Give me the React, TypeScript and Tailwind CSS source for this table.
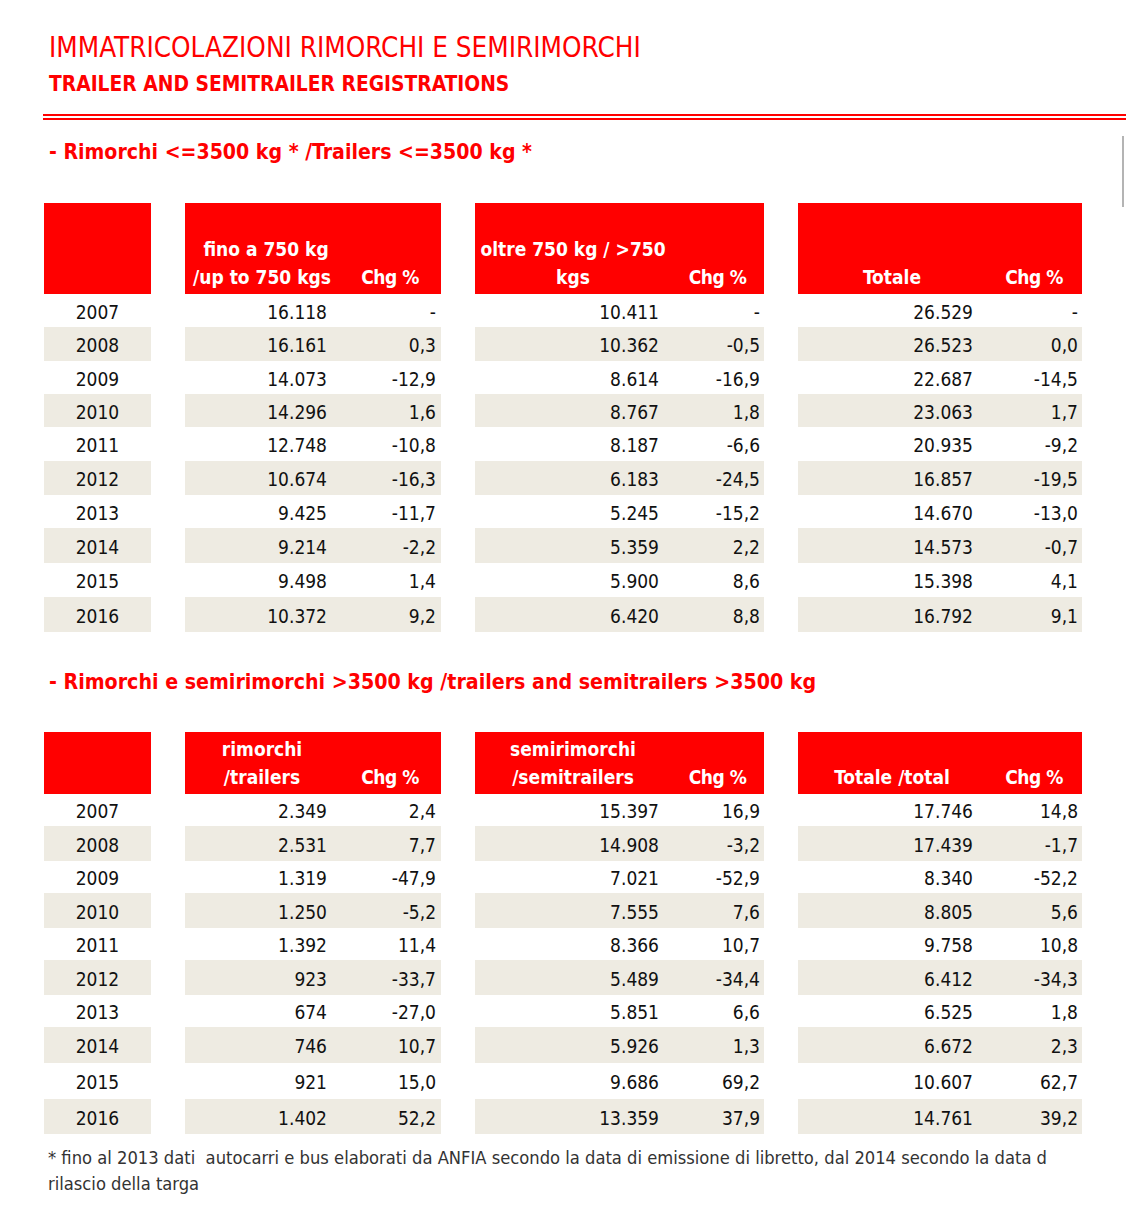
import React from "react";

type Row = [string, string, string, string, string, string, string];

const t1: Row[] = [
  ["2007", "16.118", "-", "10.411", "-", "26.529", "-"],
  ["2008", "16.161", "0,3", "10.362", "-0,5", "26.523", "0,0"],
  ["2009", "14.073", "-12,9", "8.614", "-16,9", "22.687", "-14,5"],
  ["2010", "14.296", "1,6", "8.767", "1,8", "23.063", "1,7"],
  ["2011", "12.748", "-10,8", "8.187", "-6,6", "20.935", "-9,2"],
  ["2012", "10.674", "-16,3", "6.183", "-24,5", "16.857", "-19,5"],
  ["2013", "9.425", "-11,7", "5.245", "-15,2", "14.670", "-13,0"],
  ["2014", "9.214", "-2,2", "5.359", "2,2", "14.573", "-0,7"],
  ["2015", "9.498", "1,4", "5.900", "8,6", "15.398", "4,1"],
  ["2016", "10.372", "9,2", "6.420", "8,8", "16.792", "9,1"],
];
const h1 = [33, 34, 33, 33, 34, 34, 33, 35, 34, 35];

const t2: Row[] = [
  ["2007", "2.349", "2,4", "15.397", "16,9", "17.746", "14,8"],
  ["2008", "2.531", "7,7", "14.908", "-3,2", "17.439", "-1,7"],
  ["2009", "1.319", "-47,9", "7.021", "-52,9", "8.340", "-52,2"],
  ["2010", "1.250", "-5,2", "7.555", "7,6", "8.805", "5,6"],
  ["2011", "1.392", "11,4", "8.366", "10,7", "9.758", "10,8"],
  ["2012", "923", "-33,7", "5.489", "-34,4", "6.412", "-34,3"],
  ["2013", "674", "-27,0", "5.851", "6,6", "6.525", "1,8"],
  ["2014", "746", "10,7", "5.926", "1,3", "6.672", "2,3"],
  ["2015", "921", "15,0", "9.686", "69,2", "10.607", "62,7"],
  ["2016", "1.402", "52,2", "13.359", "37,9", "14.761", "39,2"],
];
const h2 = [32, 35, 32, 35, 32, 35, 32, 36, 36, 35];

const hc: Record<number, string> = {
  32: "h-[32px]",
  33: "h-[33px]",
  34: "h-[34px]",
  35: "h-[35px]",
  36: "h-[36px]",
};

const font = { fontFamily: '"DejaVu Sans Condensed", "DejaVu Sans", sans-serif' };

function DataRows({ rows, heights }: { rows: Row[]; heights: number[] }) {
  return (
    <div className="flex flex-col">
      {rows.map((r, i) => {
        const bg = i % 2 === 1 ? "bg-[#eeebe2]" : "bg-white";
        const h = hc[heights[i]];
        return (
          <div key={r[0]} className={`flex gap-[34px] text-[19px] text-[#111] ${h}`}>
            <div className={`w-[107px] flex items-center justify-center pt-[3px] ${bg}`}>{r[0]}</div>
            <div className={`w-[256px] grid grid-cols-[154px_1fr] items-center pt-[3px] ${bg}`}>
              <div className="text-right pr-[12px]">{r[1]}</div>
              <div className="text-right pr-[5px]">{r[2]}</div>
            </div>
            <div className={`w-[289px] grid grid-cols-[196px_1fr] items-center pt-[3px] ${bg}`}>
              <div className="text-right pr-[12px]">{r[3]}</div>
              <div className="text-right pr-[4px]">{r[4]}</div>
            </div>
            <div className={`w-[284px] grid grid-cols-[188px_1fr] items-center pt-[3px] ${bg}`}>
              <div className="text-right pr-[13px]">{r[5]}</div>
              <div className="text-right pr-[4px]">{r[6]}</div>
            </div>
          </div>
        );
      })}
    </div>
  );
}

function Header({
  h,
  a,
  b,
  c,
}: {
  h: string;
  a: React.ReactNode;
  b: React.ReactNode;
  c: React.ReactNode;
}) {
  return (
    <div className={`flex gap-[34px] text-white font-bold text-[19px] leading-[28px] ${h}`}>
      <div className="w-[107px] bg-[#ff0000]" />
      <div className="w-[256px] grid grid-cols-[154px_1fr] items-end bg-[#ff0000] pb-[3px]">
        <div className="text-center">{a}</div>
        <div className="text-center tracking-[-0.5px]">Chg %</div>
      </div>
      <div className="w-[289px] grid grid-cols-[196px_1fr] items-end bg-[#ff0000] pb-[3px]">
        <div className="text-center">{b}</div>
        <div className="text-center tracking-[-0.5px]">Chg %</div>
      </div>
      <div className="w-[284px] grid grid-cols-[188px_1fr] items-end bg-[#ff0000] pb-[3px]">
        <div className="text-center">{c}</div>
        <div className="text-center tracking-[-0.5px]">Chg %</div>
      </div>
    </div>
  );
}

export default function App() {
  return (
    <div className="relative bg-white w-[1126px] h-[1226px] overflow-hidden" style={font}>
      <div className="pt-[33px] pl-[49px] text-[#ff0000]">
        <div className="text-[27.6px] leading-[30px]">IMMATRICOLAZIONI RIMORCHI E SEMIRIMORCHI</div>
        <div className="mt-[8px] text-[20.8px] leading-[26px] font-bold">TRAILER AND SEMITRAILER REGISTRATIONS</div>
      </div>
      <div className="ml-[43px] mt-[17px] flex flex-col gap-[2px]">
        <div className="h-[2px] bg-[#ff0000]" />
        <div className="h-[2px] bg-[#ff0000]" />
      </div>
      <div className="pl-[49px] mt-[18px] text-[#ff0000] font-bold text-[21.1px] leading-[28px]">
        - Rimorchi &lt;=3500 kg * /Trailers &lt;=3500 kg *
      </div>
      <div className="pl-[44px] mt-[37px]">
        <Header
          h="h-[91px]"
          a={
            <>
              <div className="pl-[8px]">fino a 750 kg</div>
              <div>/up to 750 kgs</div>
            </>
          }
          b={
            <>
              <div>oltre 750 kg / &gt;750</div>
              <div>kgs</div>
            </>
          }
          c={<div>Totale</div>}
        />
        <DataRows rows={t1} heights={h1} />
      </div>
      <div className="pl-[49px] mt-[36px] text-[#ff0000] font-bold text-[21.2px] leading-[28px]">
        - Rimorchi e semirimorchi &gt;3500 kg /trailers and semitrailers &gt;3500 kg
      </div>
      <div className="pl-[44px] mt-[36px]">
        <Header
          h="h-[62px]"
          a={
            <>
              <div>rimorchi</div>
              <div>/trailers</div>
            </>
          }
          b={
            <>
              <div>semirimorchi</div>
              <div>/semitrailers</div>
            </>
          }
          c={<div>Totale /total</div>}
        />
        <DataRows rows={t2} heights={h2} />
      </div>
      <div className="pl-[48px] mt-[11px] text-[18.2px] leading-[26px] text-[#333]">
        <div className="whitespace-nowrap">* fino al 2013 dati&nbsp; autocarri e bus elaborati da ANFIA secondo la data di emissione di libretto, dal 2014 secondo la data d</div>
        <div>rilascio della targa</div>
      </div>
      <div className="absolute left-[1122px] top-[136px] w-[2px] h-[71px] bg-[#b4b4b4]" />
    </div>
  );
}
